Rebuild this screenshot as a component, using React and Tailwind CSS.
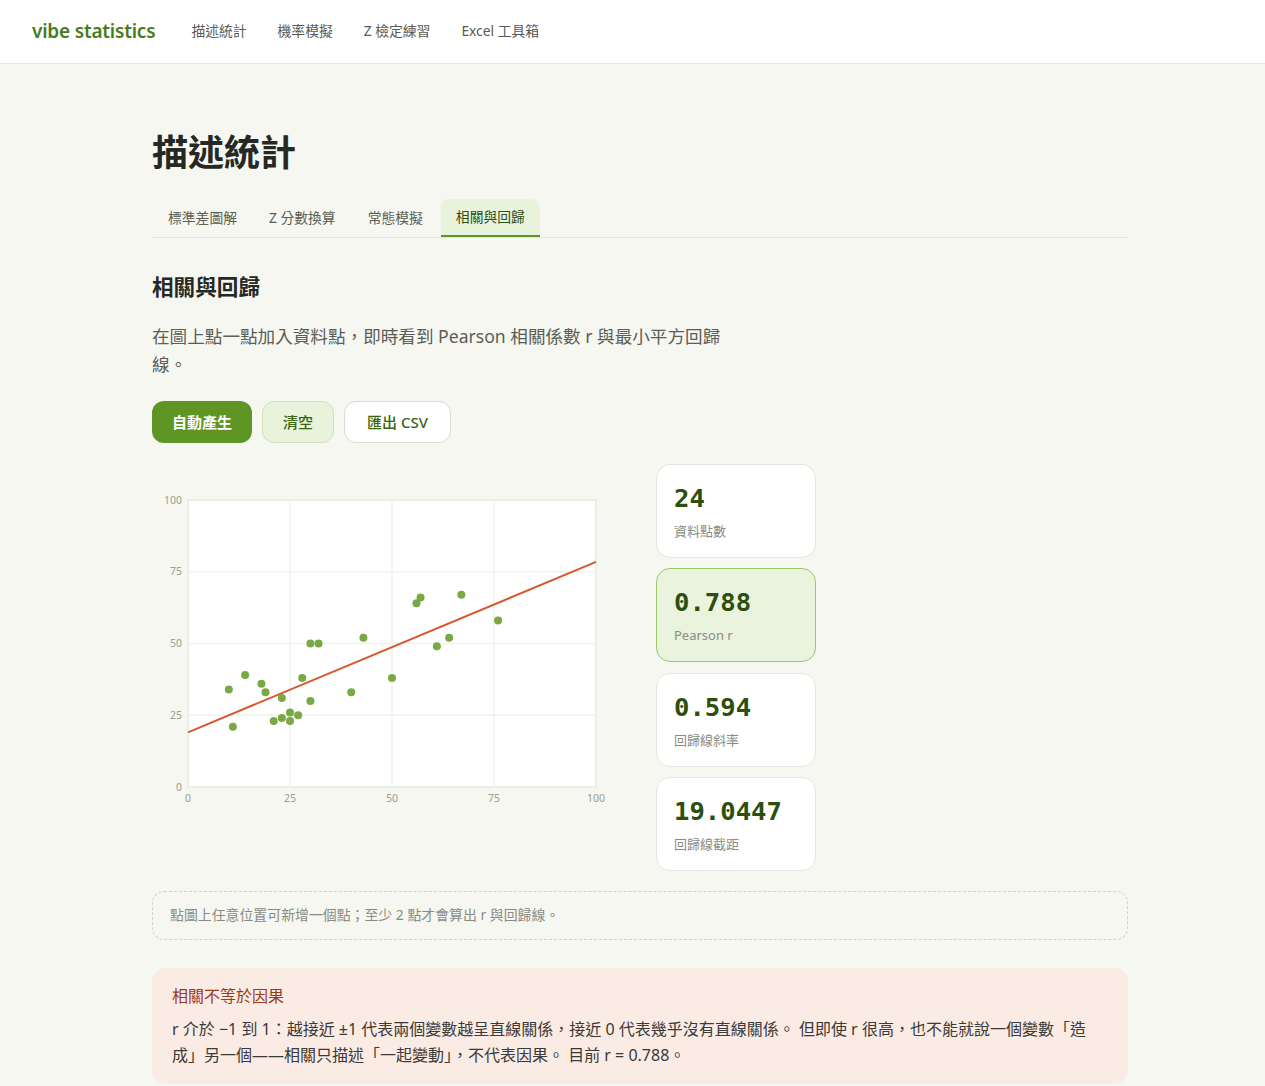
import React from 'react';

const points = [
  [10, 34], [11, 21], [14, 39], [18, 36], [19, 33], [23, 31], [21, 23], [23, 24],
  [25, 26], [25, 23], [27, 25], [28, 38], [30, 30], [30, 50], [32, 50], [40, 33],
  [43, 52], [50, 38], [56, 64], [57, 66], [61, 49], [64, 52], [67, 67], [76, 58],
];

const slope = 0.594;
const intercept = 19.0447;

// plot area inside the svg
const PX0 = 36;
const PX1 = 444;
const PY0 = 323;
const PY1 = 36;
const sx = (v) => PX0 + ((PX1 - PX0) * v) / 100;
const sy = (v) => PY0 - ((PY0 - PY1) * v) / 100;

const Scatter = () => {
  const ticks = [0, 25, 50, 75, 100];
  return (
    <svg width="480" height="356" viewBox="0 0 480 356" className="block">
      <rect x={PX0} y={PY1} width={PX1 - PX0} height={PY0 - PY1} fill="#ffffff" stroke="#eceee5" strokeWidth="2" />
      {[25, 50, 75].map((t) => (
        <g key={t}>
          <line x1={sx(t)} x2={sx(t)} y1={PY1} y2={PY0} stroke="#f1f2ec" strokeWidth="1.5" />
          <line x1={PX0} x2={PX1} y1={sy(t)} y2={sy(t)} stroke="#f1f2ec" strokeWidth="1.5" />
        </g>
      ))}
      {ticks.map((t) => (
        <text key={'y' + t} x={30} y={sy(t) + 3.5} textAnchor="end" fontSize="10.5" fill="#9aa08f" fontFamily="'Noto Sans', sans-serif">
          {t}
        </text>
      ))}
      {ticks.map((t) => (
        <text key={'x' + t} x={sx(t)} y={338} textAnchor="middle" fontSize="10.5" fill="#9aa08f" fontFamily="'Noto Sans', sans-serif">
          {t}
        </text>
      ))}
      <line x1={sx(0)} y1={sy(intercept)} x2={sx(100)} y2={sy(intercept + slope * 100)} stroke="#d9572c" strokeWidth="2" />
      {points.map(([x, y], i) => (
        <circle key={i} cx={sx(x)} cy={sy(y)} r="4" fill="#78a942" />
      ))}
    </svg>
  );
};

const StatCard = ({ value, label, active }) => (
  <div
    className={`h-[94px] w-[160px] rounded-[14px] border px-[17px] pt-[17px] ${
      active ? 'bg-[#eaf3de] border-[#9cc86a]' : 'bg-white border-[#e5e7dd]'
    }`}
  >
    <div className="text-[25.6px] font-bold leading-[32px] text-[#2c4f0e] [font-family:'DejaVu_Sans_Mono',monospace]">{value}</div>
    <div className="mt-[8px] text-[13px] leading-[18px] text-[#8b8d85]">{label}</div>
  </div>
);

const App = () => {
  return (
    <div className="min-h-screen bg-[#f5f7f0] text-[#2b2b2b] [font-family:'Noto_Sans','Noto_Sans_CJK_TC',sans-serif]">
      <header className="h-16 bg-white border-b border-[#e6e8e0] flex items-center px-8">
        <div className="text-[19px] font-semibold text-[#4a7b1b] tracking-[-0.2px]">vibe statistics</div>
        <nav className="ml-[36px] flex items-center gap-[31px] text-[13.8px] text-[#5a5a55]">
          <span>描述統計</span>
          <span>機率模擬</span>
          <span>Z 檢定練習</span>
          <span>Excel 工具箱</span>
        </nav>
      </header>

      <main className="ml-[152px] w-[976px] pt-[66px] pb-4">
        <h1 className="text-[36px] font-bold leading-[46px] text-[#262823]">描述統計</h1>

        <div className="mt-[23px] flex border-b border-[#e3e5dc]">
          <div className="px-4 h-[38px] flex items-center text-[13.8px] text-[#5b5d56]">標準差圖解</div>
          <div className="px-4 h-[38px] flex items-center text-[13.8px] text-[#5b5d56]">Z 分數換算</div>
          <div className="pl-4 pr-[18px] h-[38px] flex items-center text-[13.8px] text-[#5b5d56]">常態模擬</div>
          <div className="px-[15px] h-[38px] flex items-center text-[13.8px] text-[#2e4f12] bg-[#e9f3dc] rounded-t-[8px] border-b-2 border-[#5e9524] -mb-px">
            相關與回歸
          </div>
        </div>

        <h2 className="mt-[34px] text-[21.6px] font-bold leading-[30px] text-[#262823]">相關與回歸</h2>
        <p className="mt-5 max-w-[600px] text-[17.6px] leading-[28px] text-[#5c5d58]">
          在圖上點一點加入資料點，即時看到 Pearson 相關係數 r 與最小平方回歸線。
        </p>

        <div className="mt-[23px] flex gap-[10px] text-[15px]">
          <button className="h-[42px] w-[100px] rounded-[12px] bg-[#5e9524] text-white font-bold">自動產生</button>
          <button className="h-[42px] w-[72px] rounded-[12px] bg-[#e9f3dc] border border-[#d0dfbd] text-[#3a6614] font-medium">清空</button>
          <button className="h-[42px] w-[107px] rounded-[12px] bg-white border border-[#d9dccf] text-[#3a6614] font-medium">匯出 CSV</button>
        </div>

        <div className="mt-[21px] flex gap-6">
          <div className="w-[480px]">
            <Scatter />
          </div>
          <div className="flex flex-col gap-[10.3px]">
            <StatCard value="24" label="資料點數" />
            <StatCard value="0.788" label="Pearson r" active />
            <StatCard value="0.594" label="回歸線斜率" />
            <StatCard value="19.0447" label="回歸線截距" />
          </div>
        </div>

        <div className="mt-5 h-[49px] rounded-[12px] border border-dashed border-[#cfd2c6] px-[17px] flex items-center text-[13.9px] text-[#8a8c84]">
          點圖上任意位置可新增一個點；至少 2 點才會算出 r 與回歸線。
        </div>

        <div className="mt-7 rounded-[14px] bg-[#fbebe5] px-5 pt-4 pb-4">
          <div className="text-[16px] leading-[24px] text-[#9a3b17]">相關不等於因果</div>
          <p className="mt-2 text-[16px] leading-[26px] text-[#3a3a36]">
            r 介於 −1 到 1：越接近 ±1 代表兩個變數越呈直線關係，接近 0 代表幾乎沒有直線關係。 但即使 r 很高，也不能就說一個變數「造成」另一個——相關只描述「一起變動」，不代表因果。 目前 r = 0.788。
          </p>
        </div>
      </main>
    </div>
  );
};

export default App;
